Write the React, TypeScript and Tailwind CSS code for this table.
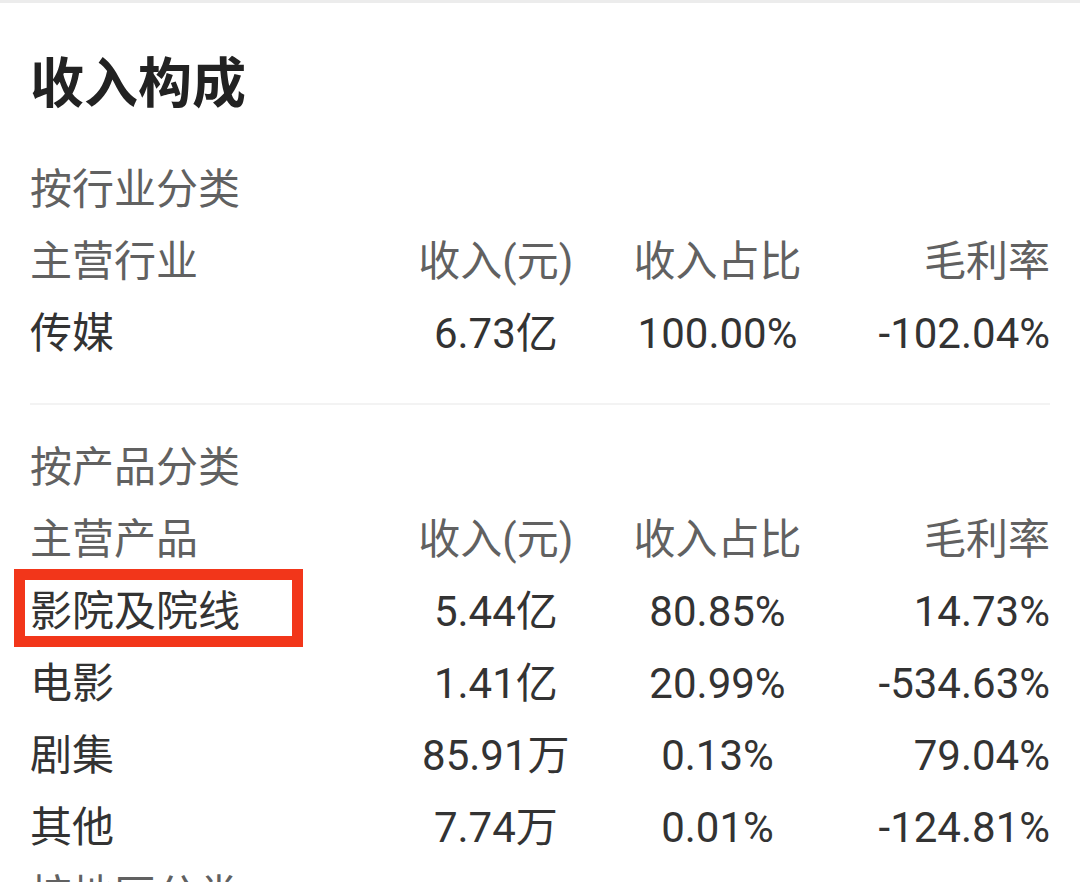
import React from 'react'

// ─── Data ─────────────────────────────────────────────────────────────────────

interface Row {
  name: string
  revenue: string
  share: string
  margin: string
}

const industryRows: Row[] = [{ name: '传媒', revenue: '6.73亿', share: '100.00%', margin: '-102.04%' }]

const productRows: Row[] = [
  { name: '影院及院线', revenue: '5.44亿', share: '80.85%', margin: '14.73%' },
  { name: '电影', revenue: '1.41亿', share: '20.99%', margin: '-534.63%' },
  { name: '剧集', revenue: '85.91万', share: '0.13%', margin: '79.04%' },
  { name: '其他', revenue: '7.74万', share: '0.01%', margin: '-124.81%' },
]

const font = { fontFamily: 'Roboto, "Noto Sans CJK SC", sans-serif' }

// ─── Pieces ───────────────────────────────────────────────────────────────────

function GridRow({ cells, muted, highlight }: { cells: string[]; muted?: boolean; highlight?: boolean }) {
  return (
    <div
      className={`relative grid h-[72px] grid-cols-[355px_1fr_1fr_1fr] items-center text-[42px] leading-none ${
        muted ? 'text-[#616161]' : 'text-[#333333]'
      }`}
    >
      <span>{cells[0]}</span>
      <span className="text-center">{cells[1]}</span>
      <span className="text-center">{cells[2]}</span>
      <span className="text-right">{cells[3]}</span>
      {highlight && (
        <div className="pointer-events-none absolute left-[-16px] top-[-7px] h-[78px] w-[289px] border-[11px] border-[#f2361a]" />
      )}
    </div>
  )
}

function SectionLabel({ text }: { text: string }) {
  return <div className="flex h-[72px] items-center text-[42px] leading-none text-[#616161]">{text}</div>
}

// ─── Page ─────────────────────────────────────────────────────────────────────

export default function App() {
  return (
    <div className="h-[882px] w-[1080px] overflow-hidden bg-white" style={font}>
      <div className="h-[3px] bg-[#ececec]" />
      <div className="px-[30px]">
        <h1 className="flex h-[151px] items-center pt-[13px] text-[54px] font-bold leading-none text-[#222222]">
          收入构成
        </h1>

        <SectionLabel text="按行业分类" />
        <GridRow cells={['主营行业', '收入(元)', '收入占比', '毛利率']} muted />
        {industryRows.map((r) => (
          <GridRow key={r.name} cells={[r.name, r.revenue, r.share, r.margin]} />
        ))}

        <div className="mb-[27px] mt-[33px] h-[2px] bg-[#f3f3f3]" />

        <SectionLabel text="按产品分类" />
        <GridRow cells={['主营产品', '收入(元)', '收入占比', '毛利率']} muted />
        {productRows.map((r, i) => (
          <GridRow key={r.name} cells={[r.name, r.revenue, r.share, r.margin]} highlight={i === 0} />
        ))}

        <div className="-mt-[4px]">
          <SectionLabel text="按地区分类" />
        </div>
      </div>
    </div>
  )
}
